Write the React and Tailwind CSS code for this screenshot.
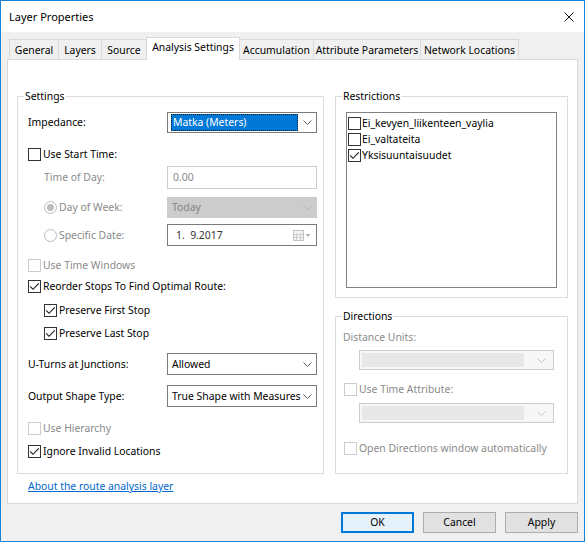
import React from 'react';
import clsx from 'clsx';

const Chevron = ({ color = '#606060' }) => (
    <svg width="9" height="5" viewBox="0 0 9 5" className="shrink-0">
        <path d="M0.5 0.5 L4.5 4.5 L8.5 0.5" fill="none" stroke={color} strokeWidth="1" />
    </svg>
);

const Check = ({ checked, disabled }) => (
    <span
        className={clsx(
            'w-[13px] h-[13px] border bg-white flex items-center justify-center shrink-0',
            disabled ? 'border-[#cccccc]' : 'border-[#333333]'
        )}
    >
        {checked && (
            <svg width="11" height="11" viewBox="0 0 11 11">
                <path d="M1.2 5.4 L4 8.3 L9.8 2.3" fill="none" stroke="#1a1a1a" strokeWidth="1.1" />
            </svg>
        )}
    </span>
);

const CheckRow = ({ label, checked, disabled, className }) => (
    <div className={clsx('h-[21px] flex items-center gap-[2px]', className)}>
        <Check checked={checked} disabled={disabled} />
        <span className={disabled ? 'text-[#8a8a8a]' : 'text-black'}>{label}</span>
    </div>
);

const Radio = ({ checked }) => (
    <span className="w-[13px] h-[13px] rounded-full border border-[#bcbcbc] bg-white flex items-center justify-center shrink-0">
        {checked && <span className="w-[7px] h-[7px] rounded-full bg-[#bcbcbc]" />}
    </span>
);

const Select = ({ value, className }) => (
    <div className={clsx('w-[150px] border border-[#7a7a7a] bg-white flex items-center pl-[3px] pr-[4px]', className)}>
        <span className="flex-1 pl-[1px] whitespace-nowrap overflow-hidden">{value}</span>
        <Chevron />
    </div>
);

const Tab = ({ label, width, active }) => (
    <div
        className={clsx(
            'border border-b-0 border-[#d9d9d9] -ml-px first:ml-0 flex items-center justify-center whitespace-nowrap',
            active ? 'h-[23px] -mb-px bg-white relative z-10 pb-[3px]' : 'h-[20px] bg-[#f0f0f0] pt-[1px]'
        )}
        style={{ width }}
    >
        {label}
    </div>
);

const Group = ({ title, className, children }) => (
    <div className={clsx('relative border border-[#dcdcdc]', className)}>
        <span className="absolute -top-[8px] left-[6px] bg-white px-[1px] leading-[15px] text-black">{title}</span>
        {children}
    </div>
);

const DisabledSelect = ({ className }) => (
    <div className={clsx('w-[195px] h-[20px] border border-[#cccccc] bg-[#f7f7f7] flex items-center pl-[2px] pr-[7px]', className)}>
        <span className="flex-1 h-[14px] bg-[#e8e8e8] mr-[13px]" />
        <Chevron color="#c4c4c4" />
    </div>
);

const tabs = [
    ['General', 50],
    ['Layers', 44],
    ['Source', 46],
    ['Analysis Settings', 94],
    ['Accumulation', 75],
    ['Attribute Parameters', 108],
    ['Network Locations', 99],
];

export default function App() {
    return (
        <div className="w-[585px] h-[542px] border border-[#1883d7] bg-[#f0f0f0] flex flex-col text-[10.4px] leading-[15px] text-black font-['Segoe_UI','Noto_Sans',sans-serif]">
            {/* Title bar */}
            <div className="h-[31px] bg-white flex items-center justify-between pl-[8px] pr-[10px] text-[11px]">
                <span>Layer Properties</span>
                <svg width="10" height="10" viewBox="0 0 10 10">
                    <path d="M0.5 0.5 L9.5 9.5 M9.5 0.5 L0.5 9.5" stroke="#111" strokeWidth="1" />
                </svg>
            </div>

            <div className="flex flex-col pl-[6px] pr-[6px] pt-[5px]">
                {/* Tabs */}
                <div className="h-[22px] flex items-end pl-[2px]">
                    {tabs.map(([label, w]) => (
                        <Tab key={label} label={label} width={w} active={label === 'Analysis Settings'} />
                    ))}
                </div>

                {/* Tab page */}
                <div className="h-[445px] border border-[#d9d9d9] bg-white pt-[36px] px-[9px] flex flex-col">
                    <div className="flex gap-[11px]">
                        <Group title="Settings" className="w-[307px] pl-[10px] pr-[6px] pt-[15px] pb-[11px]">
                            <div className="h-[21px] flex items-center justify-between">
                                <span>Impedance:</span>
                                <div className="w-[150px] h-[21px] border border-[#7a7a7a] bg-white flex items-center pl-[3px] pr-[4px]">
                                    <span className="w-[127px] h-[17px] bg-[#0078d7] text-white border border-dotted border-[#1a1a1a] flex items-center pl-[1px]">
                                        Matka (Meters)
                                    </span>
                                    <span className="flex-1" />
                                    <Chevron />
                                </div>
                            </div>
                            <CheckRow label="Use Start Time:" className="mt-[11px]" />
                            <div className="mt-[1px] h-[23px] flex items-center justify-between pl-[16px]">
                                <span className="text-[#8a8a8a]">Time of Day:</span>
                                <div className="w-[150px] h-[23px] border border-[#cccccc] flex items-center pl-[5px] text-[#8a8a8a]">0.00</div>
                            </div>
                            <div className="mt-[8px] h-[21px] flex items-center justify-between pl-[16px]">
                                <span className="flex items-center gap-[2px] text-[#8a8a8a]">
                                    <Radio checked />
                                    Day of Week:
                                </span>
                                <div className="w-[150px] h-[21px] border border-[#cccccc] bg-[#cccccc] flex items-center pl-[4px] pr-[4px] text-[#838383]">
                                    <span className="flex-1">Today</span>
                                    <Chevron color="#b5b5b5" />
                                </div>
                            </div>
                            <div className="mt-[6px] h-[22px] flex items-center justify-between pl-[16px]">
                                <span className="flex items-center gap-[2px] text-[#8a8a8a]">
                                    <Radio />
                                    Specific Date:
                                </span>
                                <div className="w-[150px] h-[22px] border border-[#7a7a7a] bg-white flex items-center pl-[8px] pr-[5px] text-[#333333]">
                                    <span className="flex-1 whitespace-pre">1.  9.2017</span>
                                    <svg width="18" height="11" viewBox="0 0 18 11">
                                        <rect x="0.5" y="0.5" width="10" height="10" fill="#f4f4f4" stroke="#c4c4c4" />
                                        <path d="M3.5 3 V10 M7.5 3 V10 M1 4.5 H10 M1 7.5 H10" stroke="#d0d0d0" />
                                        <path d="M12.5 4 L17.5 4 L15 7 Z" fill="#b0b0b0" />
                                    </svg>
                                </div>
                            </div>
                            <CheckRow label="Use Time Windows" disabled className="mt-[9px]" />
                            <CheckRow label="Reorder Stops To Find Optimal Route:" checked />
                            <CheckRow label="Preserve First Stop" checked className="mt-[3px] pl-[16px]" />
                            <CheckRow label="Preserve Last Stop" checked className="mt-[2px] pl-[16px]" />
                            <div className="mt-[9px] h-[22px] flex items-center justify-between">
                                <span>U-Turns at Junctions:</span>
                                <Select value="Allowed" className="h-[22px]" />
                            </div>
                            <div className="mt-[10px] h-[22px] flex items-center justify-between">
                                <span>Output Shape Type:</span>
                                <Select value="True Shape with Measures" className="h-[22px]" />
                            </div>
                            <CheckRow label="Use Hierarchy" disabled className="mt-[11px]" />
                            <CheckRow label="Ignore Invalid Locations" checked className="mt-[2px]" />
                        </Group>

                        <div className="w-[233px] flex flex-col">
                            <Group title="Restrictions" className="px-[10px] pt-[15px] pb-[9px]">
                                <div className="h-[176px] border border-[#828282] bg-white pt-[2px] pl-[1px]">
                                    {[
                                        ['Ei_kevyen_liikenteen_vaylia', false],
                                        ['Ei_valtateita', false],
                                        ['Yksisuuntaisuudet', true],
                                    ].map(([label, checked]) => (
                                        <div key={label} className="h-[16px] flex items-center gap-[1px]">
                                            <Check checked={checked} />
                                            <span>{label}</span>
                                        </div>
                                    ))}
                                </div>
                            </Group>

                            <Group title="Directions" className="mt-[18px] flex-1 pt-[13px] pl-[7px]">
                                <div className="h-[15px] flex items-center text-[#8a8a8a]">Distance Units:</div>
                                <DisabledSelect className="mt-[5px] ml-[16px]" />
                                <div className="mt-[12px] h-[15px] flex items-center gap-[2px] pl-[1px] text-[#8a8a8a]">
                                    <Check disabled />
                                    <span>Use Time Attribute:</span>
                                </div>
                                <DisabledSelect className="mt-[6px] ml-[16px]" />
                                <div className="mt-[18px] h-[15px] flex items-center gap-[2px] pl-[1px] text-[#8a8a8a]">
                                    <Check disabled />
                                    <span>Open Directions window automatically</span>
                                </div>
                            </Group>
                        </div>
                    </div>

                    <div className="mt-[5px] h-[15px] flex items-center pl-[11px]">
                        <span className="text-[#0066cc] underline">About the route analysis layer</span>
                    </div>
                </div>

                {/* Buttons */}
                <div className="mt-[8px] flex justify-end gap-[9px]">
                    <button className="w-[73px] h-[21px] border-2 border-[#0078d7] bg-[#e5f1fb] flex items-center justify-center">OK</button>
                    <button className="w-[73px] h-[21px] border border-[#adadad] bg-[#e1e1e1] flex items-center justify-center">Cancel</button>
                    <button className="w-[73px] h-[21px] border border-[#adadad] bg-[#e1e1e1] flex items-center justify-center">Apply</button>
                </div>
            </div>
        </div>
    );
}
